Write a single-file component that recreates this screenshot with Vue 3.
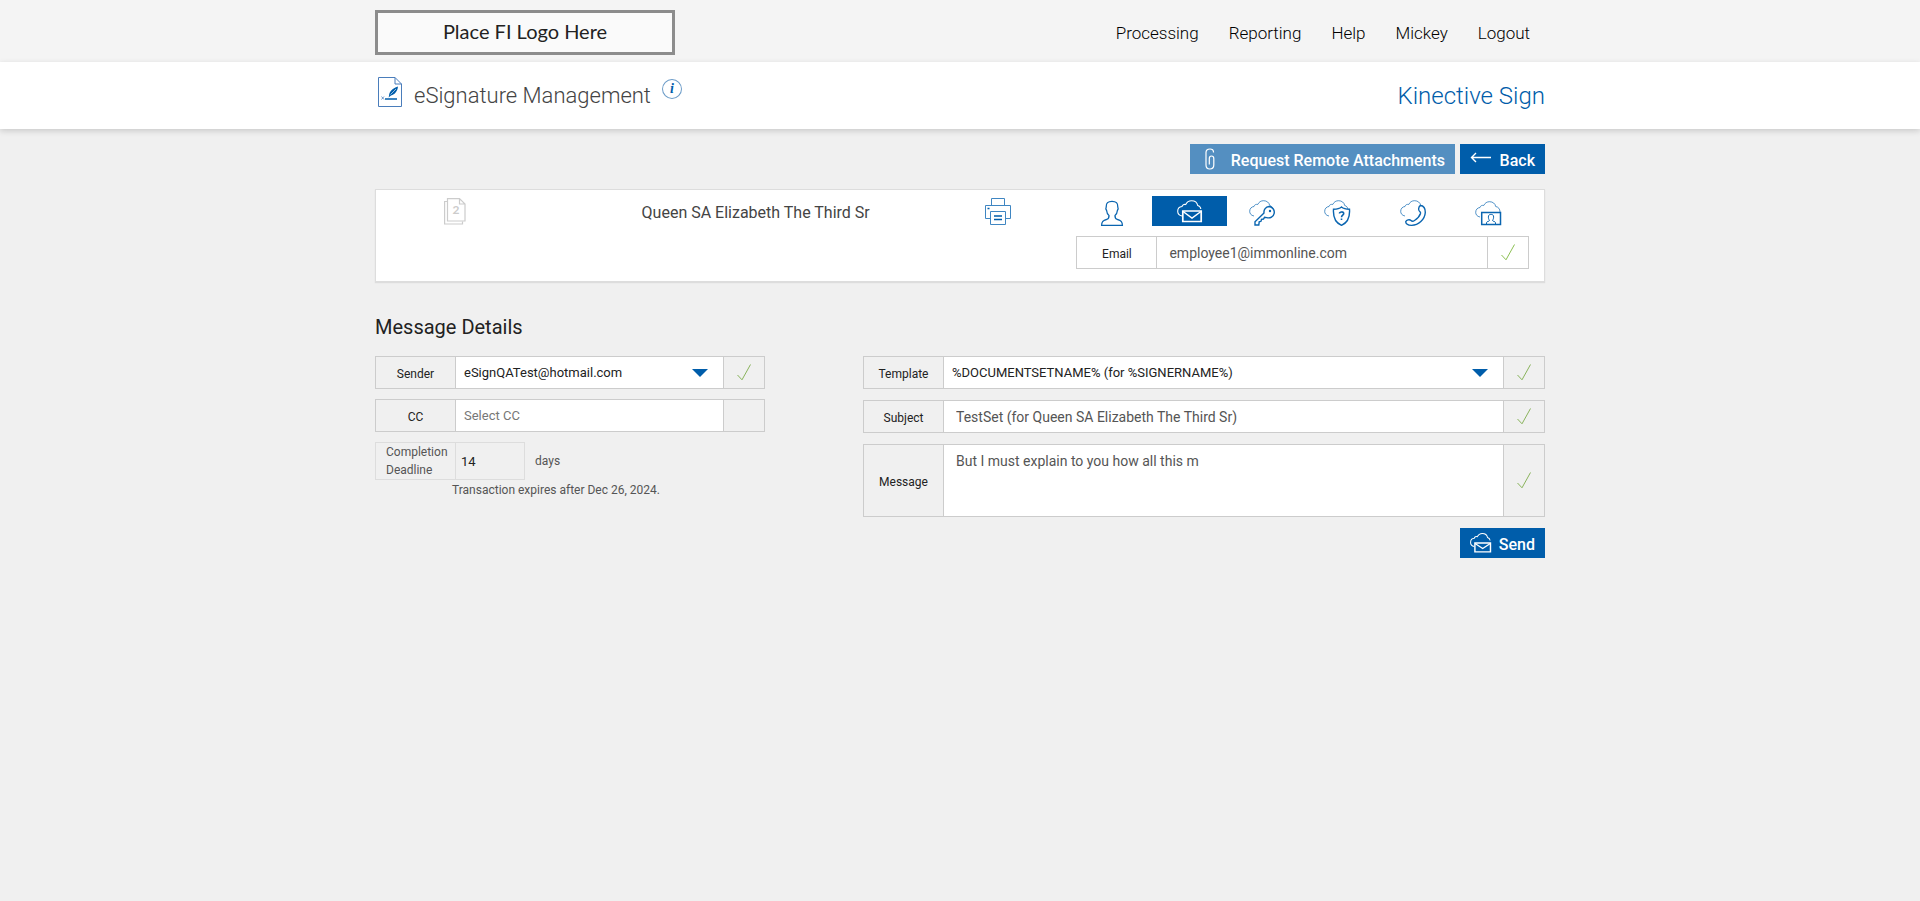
<script setup>
import { ref } from 'vue'

const nav = ['Processing', 'Reporting', 'Help', 'Mickey', 'Logout']
const methods = [
  { id: 'person', label: 'In person' },
  { id: 'mail', label: 'Email' },
  { id: 'key', label: 'Access code' },
  { id: 'shield', label: 'Security question' },
  { id: 'phone', label: 'Phone' },
  { id: 'idcard', label: 'Identity check' }
]
const active = ref('mail')
const email = ref('employee1@immonline.com')
const sender = ref('eSignQATest@hotmail.com')
const cc = ref('')
const days = ref('14')
const template = ref('%DOCUMENTSETNAME% (for %SIGNERNAME%)')
const subject = ref('TestSet (for Queen SA Elizabeth The Third Sr)')
const message = ref('But I must explain to you how all this m')
const cloud = 'M5 16C2 15.500 .7 13.500 .7 11.300C.7 8.500 2.600 6.700 5 6.500C5.400 4.800 7 4 8.700 4.500C9.900 2 12 .7 14.500 .7C17.800 .7 20.200 2.600 20.700 5.500C22.600 6 23.600 7.300 23.800 9'
</script>

<template>
  <div class="page">
    <header class="top">
      <div class="wrap top-row">
        <div class="logo">Place FI Logo Here</div>
        <nav class="nav">
          <a v-for="item in nav" :key="item" href="#">{{ item }}</a>
        </nav>
      </div>
    </header>

    <div class="title-bar">
      <div class="wrap title-row">
        <svg class="doc" width="24" height="30" viewBox="0 0 24 30" fill="none" stroke="#4a7dbb">
          <path d="M.5 .5H17L23.500 7V29.500H.5ZM17 .5V7H23.500" />
          <path d="M7 22H19" stroke="#005daa" stroke-width="1.500" />
          <path d="M3.500 19.500L6 22.500M6 19.500L3.500 22.500" stroke-width=".8" />
          <path d="M11 19C11 15 14 11.500 20 9.500C19.500 14 17 17.500 13 18.500L10.500 20.500Z" fill="#005daa" stroke="none" />
          <path d="M12.500 17.500L18 12" stroke="#fff" stroke-width=".6" />
        </svg>
        <h1>eSignature Management</h1>
        <button class="info" type="button" aria-label="Information">i</button>
        <div class="product">Kinective Sign</div>
      </div>
    </div>

    <main class="wrap">
      <div class="actions">
        <button type="button" class="btn btn-soft">
          <svg width="10" height="22" viewBox="0 0 10 22" fill="none" stroke="#fff" stroke-width="1.200">
            <path d="M8.500 4.500V4C8.500 2 7.200 1 5 1S1 2 1 4.500V17C1 19.500 2.500 21 4.800 21S8.800 19.500 8.800 17V10.500C8.800 8.800 8 8 6.500 8S4.300 8.800 4.300 10.500V16.500" />
          </svg>
          <span>Request Remote Attachments</span>
        </button>
        <button type="button" class="btn">
          <svg width="21" height="12" viewBox="0 0 21 12" fill="none" stroke="#fff" stroke-width="1.400">
            <path d="M21 5.500H1.500M6 1L1.500 5.500L6 10" />
          </svg>
          <span>Back</span>
        </button>
      </div>

      <section class="card">
        <div class="docs">
          <svg width="22" height="27" viewBox="0 0 22 27" fill="none" stroke="#ccc" stroke-width="1.200">
            <path d="M3 3.500H.6V26H18.500V23.500" />
            <path d="M3.500 .6H15.500L21 6V23H3.500ZM15.500 .6V6H21" fill="#fff" />
            <text x="12" y="16" text-anchor="middle" class="count">2</text>
          </svg>
        </div>
        <div class="name">Queen SA Elizabeth The Third Sr</div>
        <button type="button" class="print" aria-label="Print">
          <svg width="26" height="27" viewBox="0 0 26 27" fill="none" stroke="#3f86c2">
            <path d="M6.500 7.500V.5H19.500V7.500" />
            <path d="M5.500 20.500H.5V7.500H25.500V20.500H20.500" />
            <path d="M5.500 13.500H20.500V26.500H5.500Z" />
            <path d="M9 18H17M9 21.500H17" stroke="#005daa" stroke-width="1.500" />
            <path d="M2.500 10.500H4.500" stroke="#005daa" stroke-width="1.500" />
          </svg>
        </button>

        <div class="delivery">
          <div class="tabs">
            <button
              v-for="m in methods"
              :key="m.id"
              type="button"
              class="tab"
              :class="{ on: active === m.id }"
              :aria-label="m.label"
              @click="active = m.id"
            >
              <svg v-if="m.id === 'person'" width="26" height="27" viewBox="0 0 26 27" fill="none" stroke="currentColor" stroke-width="1.300">
                <path d="M10 15.500C8.500 14.500 7.800 12.500 7.600 10.500C6.800 9.500 6.700 8 7.200 7C7 3 9 1.300 13 1.300S19 3 18.800 7C19.300 8 19.200 9.500 18.400 10.500C18.200 12.500 17.500 14.500 16 15.500C15.800 18 16.500 18.800 18.500 19.500C22.500 20.500 23.400 22 23.400 25.400H2.600C2.600 22 3.500 20.500 7.500 19.500C9.500 18.800 10.200 18 10 15.500Z" />
              </svg>
              <svg v-else-if="m.id === 'mail'" width="26" height="26" viewBox="0 0 26 26" fill="none" stroke="currentColor" stroke-width="1.100">
                <path :d="cloud" />
                <path d="M5.800 11H24.200V21.500H5.800Z" stroke-width="1.700" />
                <path d="M6 11.500L15 18L24 11.500" stroke-width="1.500" />
              </svg>
              <svg v-else-if="m.id === 'key'" width="27" height="27" viewBox="0 0 27 27" fill="none" stroke="currentColor">
                <path :d="cloud" opacity=".7" />
                <path d="M20 6.500A5.700 5.700 0 1 1 17.800 17.600L15.500 17.300L14.500 19L12.500 19.300L12 21.300L10.200 21.800L9.800 25H6V21.800L15 13A5.700 5.700 0 0 1 20 6.500Z" fill="#fff" stroke-width="1.400" />
                <circle cx="21" cy="11" r="1.200" fill="currentColor" stroke="none" />
              </svg>
              <svg v-else-if="m.id === 'shield'" width="27" height="27" viewBox="0 0 27 27" fill="none" stroke="currentColor">
                <path :d="cloud" opacity=".7" />
                <path d="M17.500 7C15.500 8.800 12.500 9.300 9.500 9.300C9 16.500 11 22.500 17.500 25.300C24 22.500 26 16.500 25.500 9.300C22.500 9.300 19.500 8.800 17.500 7Z" fill="#fff" stroke-width="1.400" />
                <path d="M15.500 13.500C15.500 11.500 19.700 11.300 19.700 13.500C19.700 15.200 17.500 15.200 17.500 17.300M17.500 18.500V20" stroke-width="1.600" />
              </svg>
              <svg v-else-if="m.id === 'phone'" width="27" height="27" viewBox="0 0 27 27" fill="none" stroke="currentColor">
                <path :d="cloud" opacity=".7" />
                <path d="M20.500 5.500C23.500 5.500 25.500 8.500 25.300 12.500C24.800 19.500 18.500 25.500 11.500 25.400C8.500 25.300 5.800 24 5.700 21.800C6.500 20 9.500 19 11 20.500C12 21.500 13 21.500 14.500 20.500C17.500 18.700 19.500 16.500 20.500 13.500C20.800 12.500 20.500 12 19.500 11.300C18 10 18.500 6.500 20.500 5.500Z" fill="#fff" stroke-width="1.400" />
              </svg>
              <svg v-else width="27" height="27" viewBox="0 0 27 27" fill="none" stroke="currentColor">
                <path d="M5 17C2 16.500 .7 14.500 .7 12.300C.7 9.500 2.600 7.700 5 7.500C5.400 5.800 7 5 8.700 5.500C9.900 3 12 1.700 14.500 1.700C17.800 1.700 20.200 3.600 20.700 6.500C23.500 7 25 9 25 12" opacity=".7" />
                <path d="M6.700 12.500H25.500V24.500H6.700Z" fill="#fff" stroke-width="1.500" />
                <path d="M11.500 24V22.500C11.700 21.500 14.500 21.300 14.500 20.500C13.500 19 13.200 17.500 13.500 16C13.800 13.800 18.200 13.800 18.500 16C18.800 17.500 18.500 19 17.500 20.500C17.500 21.300 20.300 21.500 20.500 22.500V24" />
              </svg>
            </button>
          </div>
          <div class="field">
            <label for="email" class="lab">Email</label>
            <input id="email" v-model="email" class="box big" type="text" />
            <span class="ok">
              <svg width="14" height="17" viewBox="0 0 14 17" fill="none" stroke="#8bbf52"><path d="M.5 11L5 15.800L13.500 .5" /></svg>
            </span>
          </div>
        </div>
      </section>

      <h2>Message Details</h2>

      <div class="details">
        <form class="left" @submit.prevent>
          <div class="field">
            <label for="sender" class="lab">Sender</label>
            <span class="pick">
              <select id="sender" v-model="sender" class="box"><option>eSignQATest@hotmail.com</option></select>
              <svg class="caret" width="16" height="8" viewBox="0 0 16 8"><path d="M0 0H16L8 8Z" fill="#005daa" /></svg>
            </span>
            <span class="ok">
              <svg width="14" height="17" viewBox="0 0 14 17" fill="none" stroke="#89b35c"><path d="M.5 11L5 15.800L13.500 .5" /></svg>
            </span>
          </div>
          <div class="field">
            <label for="cc" class="lab">CC</label>
            <input id="cc" v-model="cc" class="box" type="text" placeholder="Select CC" />
            <span class="ok"></span>
          </div>
          <div>
            <div class="deadline">
              <div class="period">
                <label for="days">Completion Deadline</label>
                <input id="days" v-model="days" type="text" />
              </div>
              <span>days</span>
            </div>
            <p class="expires">Transaction expires after Dec 26, 2024.</p>
          </div>
        </form>

        <form class="right" @submit.prevent>
          <div class="field">
            <label for="template" class="lab">Template</label>
            <span class="pick">
              <select id="template" v-model="template" class="box"><option>%DOCUMENTSETNAME% (for %SIGNERNAME%)</option></select>
              <svg class="caret" width="16" height="8" viewBox="0 0 16 8"><path d="M0 0H16L8 8Z" fill="#005daa" /></svg>
            </span>
            <span class="ok">
              <svg width="14" height="17" viewBox="0 0 14 17" fill="none" stroke="#89b35c"><path d="M.5 11L5 15.800L13.500 .5" /></svg>
            </span>
          </div>
          <div class="field">
            <label for="subject" class="lab">Subject</label>
            <input id="subject" v-model="subject" class="box big" type="text" />
            <span class="ok">
              <svg width="14" height="17" viewBox="0 0 14 17" fill="none" stroke="#89b35c"><path d="M.5 11L5 15.800L13.500 .5" /></svg>
            </span>
          </div>
          <div class="field tall">
            <label for="message" class="lab">Message</label>
            <textarea id="message" v-model="message" class="box big"></textarea>
            <span class="ok">
              <svg width="14" height="17" viewBox="0 0 14 17" fill="none" stroke="#89b35c"><path d="M.5 11L5 15.800L13.500 .5" /></svg>
            </span>
          </div>
          <button type="submit" class="btn send">
            <svg width="22" height="22" viewBox="0 0 26 24" fill="none" stroke="#fff" stroke-width="1.200">
              <path :d="cloud" />
              <path d="M5.800 12H24.200V22.500H5.800Z" stroke-width="1.700" />
              <path d="M6 12.500L15 18.500L24 12.500" stroke-width="1.500" />
            </svg>
            <span>Send</span>
          </button>
        </form>
      </div>
    </main>
  </div>
</template>

<style>
body {
  background: #f0f0f0;
}
</style>

<style scoped>
.page,
.page * {
  box-sizing: border-box;
}
.page {
  font-family: Roboto, "Liberation Sans", sans-serif;
  color: #222;
}
.page button,
.page input,
.page select,
.page textarea {
  font-family: inherit;
  margin: 0;
  border: 0;
  border-radius: 0;
  outline: 0;
}
.page button {
  cursor: pointer;
}
.page svg {
  display: block;
  flex: none;
}
.wrap {
  max-width: 1170px;
  margin: 0 auto;
}
.top {
  background: #f4f4f4;
}
.top-row {
  display: flex;
  justify-content: space-between;
  align-items: center;
  padding: 10px 0 7px;
}
.logo {
  width: 300px;
  height: 45px;
  border: 3px solid #8c8c8c;
  background: #fafafa;
  text-align: center;
  font: 20px/36px Lato, sans-serif;
}
.nav {
  display: flex;
  gap: 30px;
  padding-right: 15px;
}
.nav a {
  font-size: 17px;
  line-height: 24px;
  font-weight: 300;
  color: #000;
  text-decoration: none;
}
.title-bar {
  background: #fff;
  box-shadow: 0 2px 6px rgba(0, 0, 0, 0.16);
}
.title-row {
  display: flex;
  align-items: flex-start;
  height: 67px;
  padding: 15px 0 0 3px;
}
h1 {
  margin: 4px 0 0 12px;
  font-size: 22px;
  line-height: 30px;
  font-weight: 300;
  color: #444;
}
.page .info {
  width: 20px;
  height: 20px;
  margin: 2px 0 0 11px;
  padding: 0;
  border-radius: 50%;
  background: #fff;
  box-shadow: inset 0 0 0 1px #6c9cc8;
  color: #005daa;
  font: italic bold 14px/20px "Liberation Serif", serif;
}
.product {
  margin: 4px 0 0 auto;
  font-size: 24px;
  line-height: 30px;
  font-weight: 300;
  color: #005daa;
}
.actions {
  display: flex;
  justify-content: flex-end;
  gap: 5px;
  padding: 15px 0;
}
.btn {
  display: flex;
  align-items: flex-start;
  justify-content: space-between;
  width: 85px;
  height: 30px;
  padding: 4px 10px 0;
  background: #005daa;
  color: #fff;
  font-size: 16px;
  line-height: 26px;
  font-weight: 500;
}
.btn svg {
  margin-top: 4px;
}
.btn-soft {
  width: 265px;
  padding-left: 15px;
  background: #548fc1;
}
.btn-soft svg,
.send svg {
  margin-top: 0;
}
.card {
  display: grid;
  grid-template-columns: 158fr 444fr 42fr 510fr;
  align-items: start;
  padding: 6px 15px 12px 0;
  border: 1px solid #ddd;
  background: #fff;
  box-shadow: 0 1px 1px #ddd;
}
.docs,
.print {
  display: flex;
  justify-content: center;
  padding: 2px 0 0;
  background: none;
}
.count {
  fill: #ccc;
  stroke: none;
  font: bold 12px Lato, sans-serif;
}
.name {
  padding-top: 5px;
  text-align: center;
  font-size: 16px;
  line-height: 24px;
  color: #444;
}
.delivery {
  padding-left: 57px;
}
.tabs {
  display: grid;
  grid-template-columns: repeat(6, 1fr);
  margin-bottom: 10px;
}
.tab {
  display: flex;
  justify-content: center;
  height: 30px;
  padding: 4px 5px 0 0;
  background: none;
  color: #0a65b0;
}
.tab.on {
  padding-right: 0;
  background: #005daa;
  color: #fff;
}
.field {
  display: flex;
  height: 33px;
  border: 1px solid #ccc;
}
.tall {
  height: 73px;
}
.lab {
  display: flex;
  align-items: center;
  justify-content: center;
  width: 80px;
  flex: none;
  padding-top: 2px;
  border-right: 1px solid #ccc;
  font-size: 12px;
}
.box {
  flex: 1;
  min-width: 0;
  padding: 0 8px;
  background: #fff;
  color: #222;
  font-size: 13px;
  appearance: none;
}
.box.big {
  padding: 0 12px;
  font-size: 14px;
  color: #555;
}
textarea.box.big {
  padding-top: 7px;
  line-height: 18px;
  resize: none;
}
.box::placeholder {
  color: #777;
  opacity: 1;
}
.pick {
  display: grid;
  flex: 1;
  align-items: center;
  background: #fff;
}
.pick > * {
  grid-area: 1 / 1;
}
.pick select {
  height: 31px;
}
.caret {
  justify-self: end;
  margin-right: 15px;
  pointer-events: none;
}
.ok {
  display: flex;
  align-items: center;
  justify-content: center;
  width: 41px;
  flex: none;
  border-left: 1px solid #ccc;
}
h2 {
  margin: 32px 0 16px;
  font-size: 20px;
  line-height: 26px;
  font-weight: 400;
}
.details {
  display: grid;
  grid-template-columns: 390fr 682fr;
  gap: 98px;
}
.left,
.right {
  display: flex;
  flex-direction: column;
  gap: 10px;
}
.right {
  gap: 11px;
}
.deadline {
  display: flex;
  align-items: center;
  gap: 10px;
  font-size: 12px;
  color: #555;
}
.period {
  display: flex;
  width: 150px;
  border: 1px solid #ddd;
}
.period label {
  width: 80px;
  flex: none;
  padding-left: 10px;
  border-right: 1px solid #ddd;
  line-height: 18px;
}
.period input {
  min-width: 0;
  width: 100%;
  padding: 0 5px;
  background: none;
  color: #222;
  font-size: 13px;
}
.expires {
  margin: 0 0 0 77px;
  font-size: 12px;
  line-height: 20px;
  color: #555;
}
.send {
  align-self: flex-end;
}
</style>
